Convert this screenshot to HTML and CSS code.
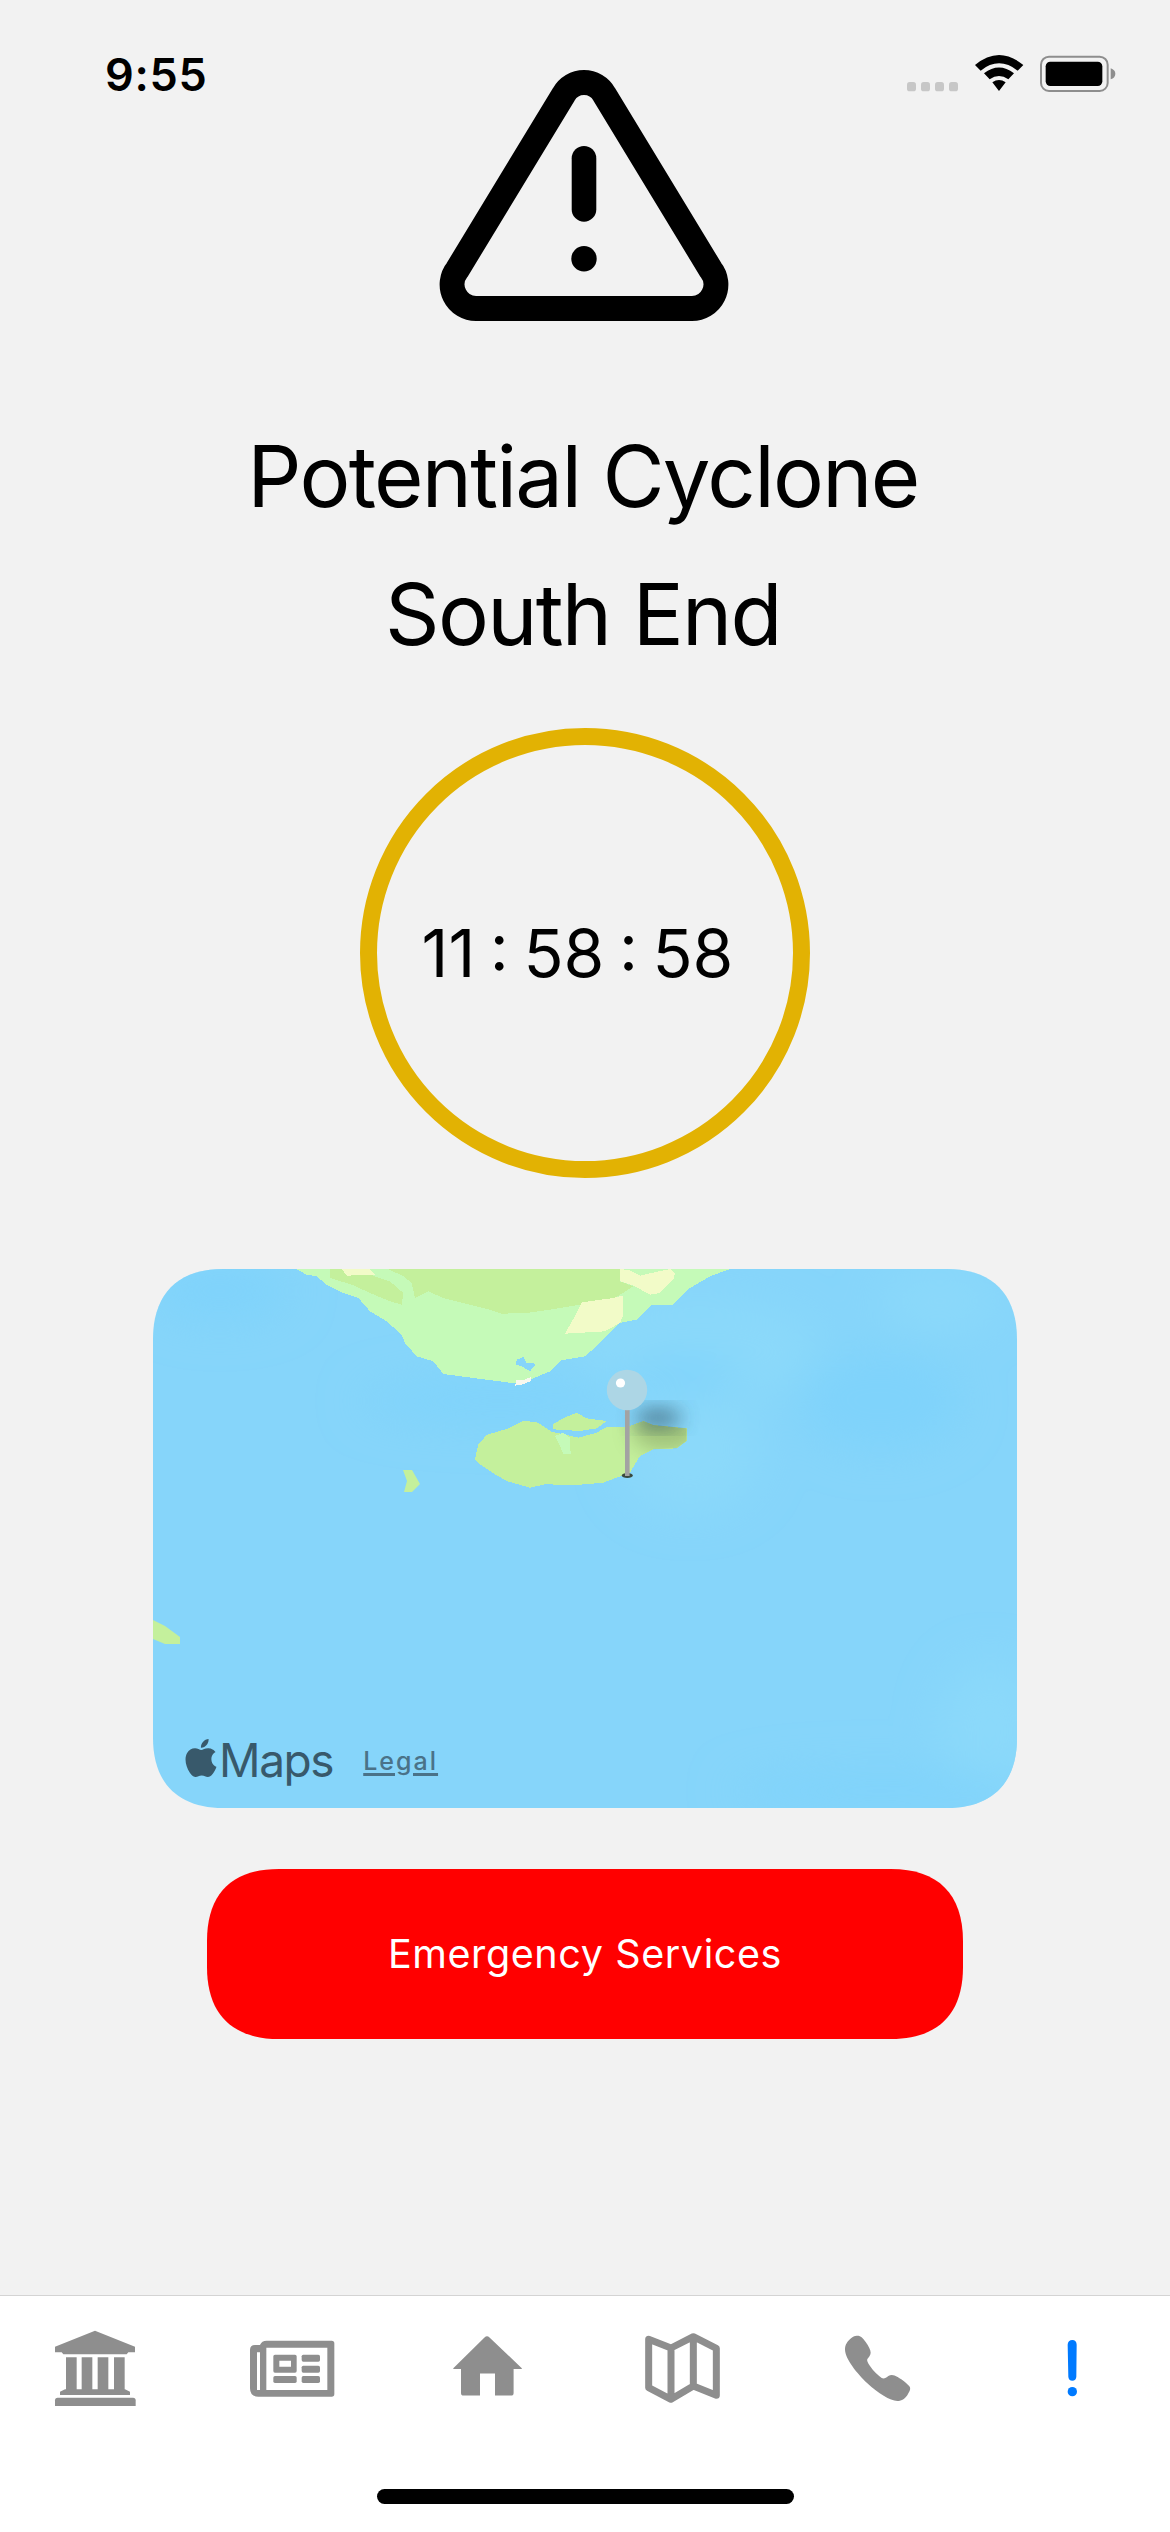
FILE: index.html
```html
<!DOCTYPE html>
<html lang="en">
<head>
<meta charset="utf-8">
<title>Potential Cyclone</title>
<link rel="stylesheet" href="styles.css">
</head>
<body>
<div class="screen">
  <header class="status">
    <span class="clock">9:55</span>
    <svg class="status-icons" viewBox="0 0 840 240" aria-hidden="true">
      <g class="sig">
        <rect x="141" y="156" width="27" height="28" rx="8"/>
        <rect x="183" y="156" width="27" height="28" rx="8"/>
        <rect x="225" y="156" width="27" height="28" rx="8"/>
        <rect x="267" y="156" width="27" height="28" rx="8"/>
      </g>
      <path d="M345 105Q417 45 490 105L473 122Q417 78 362 122ZM372 130Q417 95 462 130L445 148Q417 128 389 148ZM397 157Q417 143 437 157L417 183Z"/>
      <rect class="batt" x="543" y="80" width="200" height="103" rx="24"/>
      <rect x="557" y="95" width="170" height="73" rx="14"/>
      <path class="batt-cap" d="M752 115Q766 120 766 131Q766 143 752 148Z"/>
    </svg>
  </header>

  <main class="content">
    <svg class="warning" viewBox="430 60 310 270" aria-hidden="true">
      <path class="warning-line" d="M563.7 94.5A23.2 23.2 0 0 1 604.3 94.5L710.6 269.5A24 24 0 0 1 691.3 308.5H476.7A24 24 0 0 1 457.4 269.5Z"/>
      <rect x="571.7" y="146" width="24.6" height="75.7" rx="12.3"/>
      <circle cx="584" cy="258.7" r="12.7"/>
    </svg>

    <h1 class="title">Potential Cyclone<br>South End</h1>

    <div class="timer"><span>11 : 58 : 58</span></div>

    <section class="map">
      <svg class="map-art" viewBox="153 1268 864 539" aria-hidden="true">
        <defs>
          <filter id="soft" x="-50%" y="-50%" width="200%" height="200%"><feGaussianBlur stdDeviation="22"/></filter>
          <filter id="shade" x="-50%" y="-50%" width="200%" height="200%"><feGaussianBlur stdDeviation="10"/></filter>
          <clipPath id="island">
            <path transform="translate(440 1340) scale(.33333)" d="M105 355L115 310L140 282L205 262L250 240L290 243L335 272L415 290L470 275L500 258L560 258L610 240L640 252L740 262V300L710 322L640 325L600 345L570 395L490 425L410 432L315 430L270 440L200 420L165 400L120 370Z"/>
          </clipPath>
        </defs>
        <rect x="153" y="1268" width="864" height="539" class="sea"/>
        <g filter="url(#soft)">
          <ellipse cx="700" cy="1350" rx="120" ry="50" class="sea-light"/>
          <ellipse cx="690" cy="1450" rx="70" ry="60" class="sea-light"/>
          <ellipse cx="940" cy="1300" rx="60" ry="30" class="sea-light"/>
          <ellipse cx="990" cy="1730" rx="50" ry="70" class="sea-light"/>
          <ellipse cx="500" cy="1400" rx="140" ry="22" class="sea-deep"/>
          <ellipse cx="680" cy="1375" rx="60" ry="20" class="sea-deep"/>
          <ellipse cx="880" cy="1400" rx="80" ry="50" class="sea-deep"/>
          <ellipse cx="220" cy="1290" rx="70" ry="30" class="sea-deep"/>
          <ellipse cx="880" cy="1790" rx="150" ry="20" class="sea-deep"/>
        </g>

        <g transform="translate(290 1262) scale(.33333)" shape-rendering="crispEdges">
          <path class="land" d="M18 18L50 35L80 40L110 65L155 88L205 105L240 145L290 175L335 215L345 240L380 280L430 295L460 333L550 345L630 355L680 362L720 350L780 325L815 292L885 280L930 240L990 180L1040 170L1085 127L1150 125L1200 75L1260 40L1320 18Z"/>
          <path class="land-dark" d="M295 18L340 40L365 60L375 105L415 85L460 105L520 120L600 140L635 152L710 150L780 140L870 125L975 105L1030 70L990 55L990 18Z"/>
          <path class="land-dark" d="M120 18V45L185 65L240 90L300 115L335 125L340 90L300 55L240 35L160 18Z"/>
          <path class="land-pale" d="M155 18L170 38L255 35L240 18Z"/>
          <path class="land-pale" d="M990 18V55L1035 70L1080 95L1110 90L1150 50L1155 30L1140 18L1085 30L1050 38L1020 22Z"/>
          <path class="land-pale" d="M825 212L860 150L875 118L970 105L998 98V160L990 180L945 205Z"/>
          <path class="sea-hole" d="M680 290L700 282L710 300L738 302L720 325L695 310L678 305Z"/>
          <path class="land-white" d="M678 352L705 350L722 342L722 355L695 365L676 368Z"/>
        </g>

        <g transform="translate(440 1340) scale(.33333)" shape-rendering="crispEdges">
          <path class="land-dark" d="M105 355L115 310L140 282L205 262L250 240L290 243L335 272L415 290L470 275L500 258L560 258L610 240L640 252L740 262V300L710 322L640 325L600 345L570 395L490 425L410 432L315 430L270 440L200 420L165 400L120 370Z"/>
          <path class="land-dark" d="M340 248L385 225L410 215L440 232L500 240L470 262L420 270L340 265Z"/>
          <path class="land" d="M345 285L370 275L390 290L392 340L370 340L360 315Z"/>
        </g>

        <path class="land-dark" d="M403 1469H412L420 1483L412 1491H404L407 1480Z"/>
        <path class="land-dark" d="M153 1619L165 1625L180 1636V1643H165L153 1638Z"/>

        <g clip-path="url(#island)">
          <ellipse cx="665" cy="1430" rx="34" ry="20" class="pin-shadow-land" filter="url(#shade)"/>
        </g>
        <ellipse cx="658" cy="1417" rx="24" ry="9" class="pin-shadow" filter="url(#shade)"/>
        <ellipse cx="627.3" cy="1474.5" rx="5.5" ry="2.5" class="pin-foot"/>
        <rect x="625" y="1408" width="4.6" height="67" class="pin-needle"/>
        <circle cx="627" cy="1389" r="20.2" class="pin-head"/>
        <circle cx="620.5" cy="1382" r="4.6" class="pin-glint"/>
      </svg>
      <div class="attribution">
        <svg class="apple" viewBox="0 0 24 24" aria-hidden="true"><path d="M12.152 6.896c-.948 0-2.415-1.078-3.96-1.04-2.04.027-3.91 1.183-4.961 3.014-2.117 3.675-.546 9.103 1.519 12.09 1.013 1.454 2.208 3.09 3.792 3.039 1.52-.065 2.09-.987 3.935-.987 1.831 0 2.35.987 3.96.948 1.637-.026 2.676-1.48 3.676-2.948 1.156-1.688 1.636-3.325 1.662-3.415-.039-.013-3.182-1.221-3.22-4.857-.026-3.04 2.48-4.494 2.597-4.559-1.429-2.09-3.623-2.324-4.39-2.376-2-.156-3.675 1.09-4.61 1.09zM15.53 3.83c.843-1.012 1.4-2.427 1.245-3.83-1.207.052-2.662.805-3.532 1.818-.78.896-1.454 2.338-1.273 3.714 1.338.104 2.715-.688 3.559-1.701"/></svg>
        <span class="maps-word">Maps</span>
        <span class="legal">Legal</span>
      </div>
    </section>

    <button class="emergency" type="button">Emergency Services</button>
  </main>

  <footer class="tabbar">
    <nav class="tabs">
      <svg class="tab" viewBox="-120 0 585 300" aria-hidden="true">
        <path d="M165 32L285 80V97H265L260 103H70L65 97H45V80Z"/>
        <path d="M78 112H110V210H78ZM125 112H157V210H125ZM173 112H205V210H173ZM222 112H254V210H222Z"/>
        <path d="M60 225V215L75 208H255L270 215V225Z"/>
        <path d="M45 258V241Q45 233 53 233H279Q287 233 287 241V258Z"/>
      </svg>
      <svg class="tab" viewBox="465 0 585 300" aria-hidden="true">
        <path fill-rule="evenodd" d="M660 75Q665 62 680 62H875Q883 62 883 70V222Q883 230 875 230H655Q630 230 630 205V90Q630 75 645 75ZM679 83V210H862V83ZM651 97V210H660V97Z"/>
        <path fill-rule="evenodd" d="M705 104H765Q770 104 770 109V153Q770 158 765 158H705Q700 158 700 153V109Q700 104 705 104ZM718 122V140H753V122Z"/>
        <rect x="785" y="104" width="55" height="21" rx="5"/>
        <rect x="785" y="137" width="55" height="21" rx="5"/>
        <rect x="700" y="168" width="70" height="21" rx="5"/>
        <rect x="785" y="168" width="55" height="21" rx="5"/>
      </svg>
      <svg class="tab" viewBox="390 2320 195 100" aria-hidden="true">
        <path d="M484.5 2337.5Q487 2335 489.5 2337.5L521.8 2368.2V2369H513.6V2393Q513.6 2395.6 511 2395.6H495V2373.6H480V2395.6H463.6Q461 2395.6 461 2393V2369H453.3V2368.2Z"/>
      </svg>
      <svg class="tab" viewBox="-135 0 585 300" aria-hidden="true">
        <path class="tab-line" d="M56 58L123 84L190 50L259 85V226L190 198L123 238L56 203ZM123 84V238M190 50V198"/>
      </svg>
      <svg class="tab" viewBox="450 0 585 300" aria-hidden="true">
        <path d="M680 47C692 46 699 54 707 66C716 79 722 90 722 98C722 106 716 111 712 117C710 122 713 128 720 138C730 153 745 167 755 174C762 178 768 173 775 168C784 163 792 165 803 171C818 180 832 191 838 199C843 206 840 212 834 222C826 236 816 243 802 243C780 243 745 220 712 190C682 161 645 118 645 88C645 74 652 64 664 54C670 49 675 47 680 47Z"/>
      </svg>
      <svg class="tab tab-active" viewBox="1035 0 585 300" aria-hidden="true">
        <path d="M1327 60C1335 60 1340 66 1340 74L1339 170C1339 177 1334 182 1327 182C1320 182 1315 177 1315 170L1313 74C1313 66 1319 60 1327 60Z"/>
        <circle cx="1327" cy="215" r="14"/>
      </svg>
    </nav>
    <div class="home-indicator"></div>
  </footer>
</div>
</body>
</html>
```
FILE: styles.css
```css
* { box-sizing: border-box; }

html, body {
  margin: 0;
  padding: 0;
}

body {
  background: #f2f2f2;
  color: #000;
  font-family: Inter, "Liberation Sans", sans-serif;
}

.screen {
  position: relative;
  display: flex;
  flex-direction: column;
  width: 1170px;
  height: 2532px;
  overflow: hidden;
}

/* Status bar floats over the hero icon */
.status {
  position: absolute;
  top: 30px;
  left: 105px;
  right: 30px;
  height: 80px;
  display: flex;
  justify-content: space-between;
}

.clock {
  font-size: 45px;
  font-weight: 600;
  line-height: 80px;
  padding-top: 5px;
  letter-spacing: 0.7px;
}

.status-icons {
  width: 280px;
  height: 80px;
}

.sig { fill: #c7c7c7; }
.batt { fill: none; stroke: #8e8e8e; stroke-width: 6; }
.batt-cap { fill: #8e8e8e; }

/* Main column */
.content {
  flex: 1;
  display: flex;
  flex-direction: column;
  align-items: center;
  padding-top: 60px;
}

.warning {
  width: 310px;
  height: 270px;
  flex: none;
}

.warning-line {
  fill: none;
  stroke: #000;
  stroke-width: 25;
  stroke-linejoin: round;
}

.title {
  margin: 78px 0 0;
  padding-right: 4px;
  font-size: 85px;
  font-weight: 400;
  line-height: 138px;
  text-align: center;
  letter-spacing: -1.7px;
}

.timer {
  width: 450px;
  height: 450px;
  margin-top: 44px;
  flex: none;
  display: flex;
  align-items: center;
  justify-content: center;
  border: 17px solid #e2b203;
  border-radius: 50%;
  font-size: 66px;
  word-spacing: -4px;
  padding-right: 15px;
}

/* Map card */
.map {
  position: relative;
  width: 864px;
  height: 539px;
  margin-top: 91px;
  flex: none;
  clip-path: path("M70 0H794C839 0 864 25 864 70V469C864 514 839 539 794 539H70C25 539 0 514 0 469V70C0 25 25 0 70 0Z");
}

.map-art {
  display: block;
  width: 864px;
  height: 539px;
}

.sea { fill: #86d5fa; }
.sea-light { fill: #8bd9fa; }
.sea-deep { fill: #7fd3fb; }
.sea-hole { fill: #86d5fa; }
.land { fill: #c5fab8; }
.land-dark { fill: #c4f09c; }
.land-pale { fill: #f2fbc8; }
.land-white { fill: #f8f8ee; }

.pin-shadow { fill: #2f4f60; opacity: .7; }
.pin-shadow-land { fill: #5f6f40; opacity: .35; }
.pin-foot { fill: #3a4a40; }
.pin-needle { fill: #a3a3a3; }
.pin-head { fill: #add6e5; }
.pin-glint { fill: #fff; }

.attribution {
  position: absolute;
  left: 29px;
  bottom: 18px;
  display: flex;
  align-items: flex-end;
  color: #38596b;
}

.apple {
  width: 38px;
  height: 38px;
  flex: none;
  fill: #38596b;
  margin: 0 -1px 13px 0;
}

.maps-word {
  font-size: 46px;
  line-height: 60px;
  letter-spacing: -1.4px;
}

.legal {
  margin: 0 0 14px 30px;
  font-size: 25px;
  font-weight: 500;
  line-height: 30px;
  letter-spacing: 2px;
  color: #4a7288;
  text-decoration: underline;
  text-decoration-thickness: 3px;
  text-underline-offset: 3px;
}

/* Action */
.emergency {
  width: 756px;
  height: 170px;
  margin-top: 61px;
  flex: none;
  border: 0;
  clip-path: path("M72 0H684C731 0 756 25 756 72V98C756 145 731 170 684 170H72C25 170 0 145 0 98V72C0 25 25 0 72 0Z");
  background: #ff0000;
  color: #fff;
  font-family: inherit;
  font-size: 39.5px;
  font-weight: 400;
  letter-spacing: 0.6px;
}

/* Tab bar */
.tabbar {
  flex: none;
  height: 237px;
  padding-top: 24px;
  background: #fff;
  border-top: 1px solid #d4d4d4;
}

.tabs {
  display: grid;
  grid-template-columns: repeat(6, 195px);
}

.tab {
  display: block;
  width: 195px;
  height: 100px;
  fill: #8e8e8e;
}

.tab-line {
  fill: none;
  stroke: #8e8e8e;
  stroke-width: 21;
  stroke-linejoin: round;
}

.tab-active { fill: #007aff; }

.home-indicator {
  width: 417px;
  height: 15px;
  margin: 69px auto 0;
  border-radius: 8px;
  background: #000;
}
```
